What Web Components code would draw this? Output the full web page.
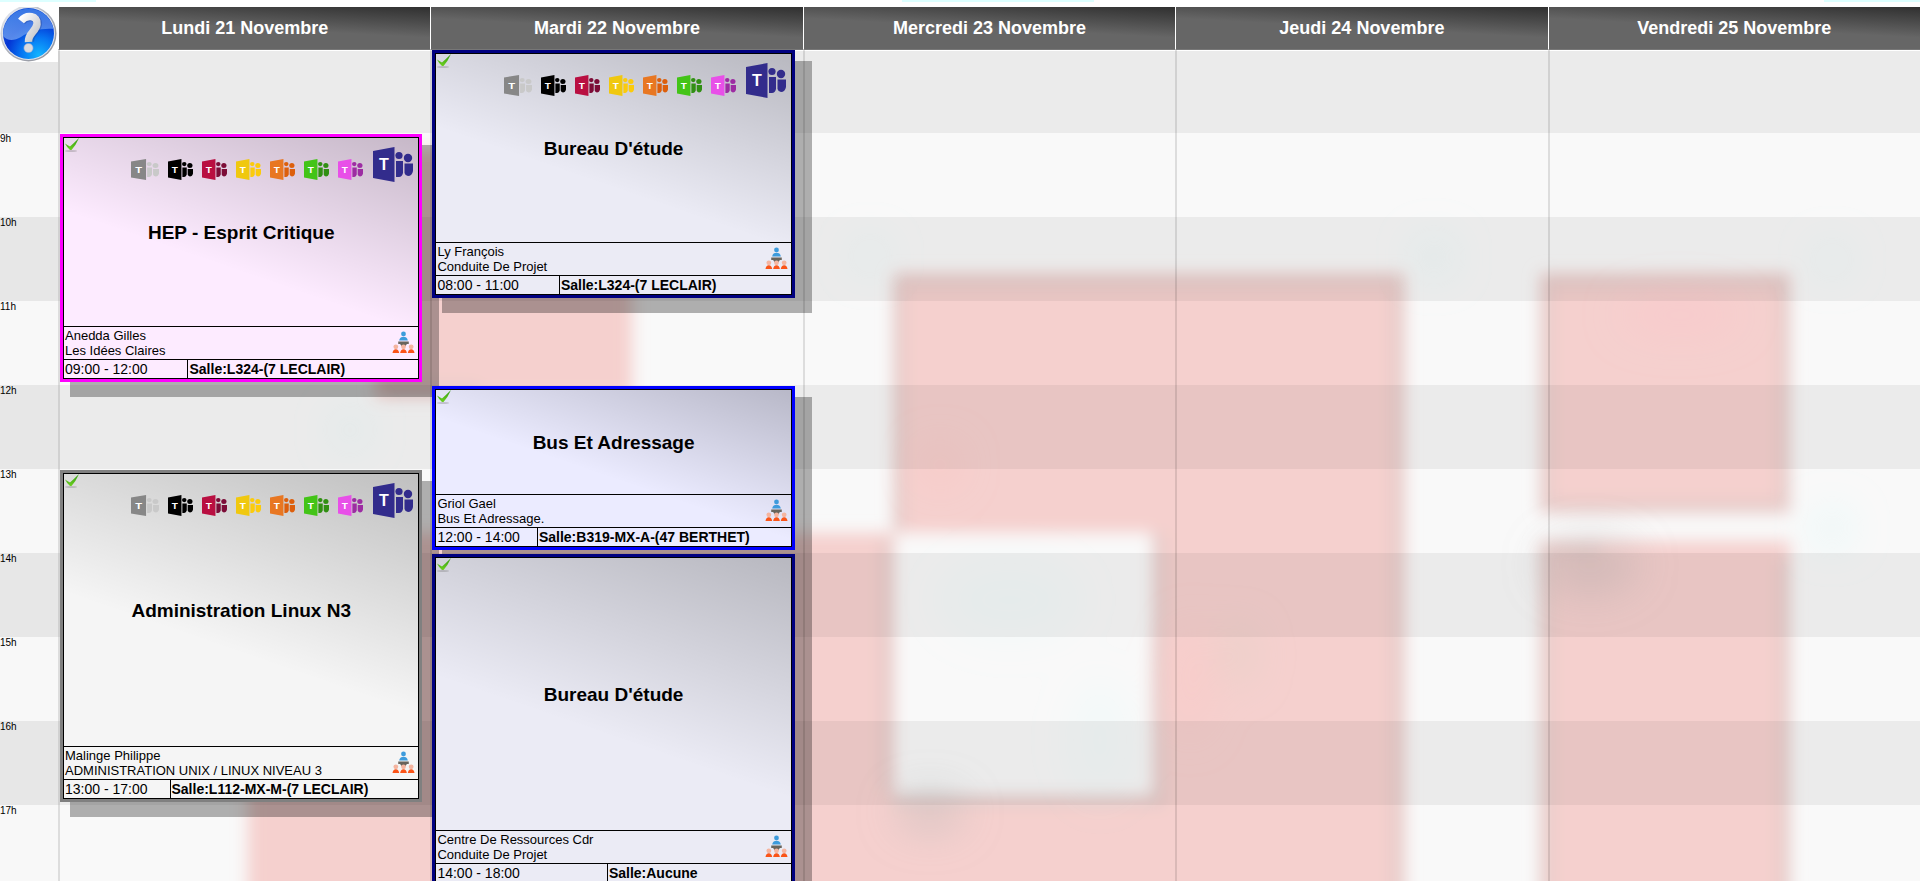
<!DOCTYPE html>
<html lang="fr">
<head>
<meta charset="utf-8">
<title>Emploi du temps</title>
<style>
  html, body { margin: 0; height: 100%; }
  body { background: #fff; font-family: "Liberation Sans", Arial, sans-serif; color: #000; overflow: hidden; }
</style>
</head>
<body>
<week-planner>
  <help-button slot="gutter"></help-button>
  <hour-scale slot="gutter"></hour-scale>

  <day-heading slot="headings">Lundi 21 Novembre</day-heading>
  <day-heading slot="headings">Mardi 22 Novembre</day-heading>
  <day-heading slot="headings">Mercredi 23 Novembre</day-heading>
  <day-heading slot="headings">Jeudi 24 Novembre</day-heading>
  <day-heading slot="headings">Vendredi 25 Novembre</day-heading>

  <day-column>
    <course-card start="9" hours="3" tone="magenta" teams>
      HEP - Esprit Critique
      <span slot="teacher">Anedda Gilles</span>
      <span slot="subject">Les Idées Claires</span>
      <span slot="time">09:00 - 12:00</span>
      <span slot="room">Salle:L324-(7 LECLAIR)</span>
    </course-card>
    <course-card start="13" hours="4" tone="grey" teams>
      Administration Linux N3
      <span slot="teacher">Malinge Philippe</span>
      <span slot="subject">ADMINISTRATION UNIX / LINUX NIVEAU 3</span>
      <span slot="time">13:00 - 17:00</span>
      <span slot="room">Salle:L112-MX-M-(7 LECLAIR)</span>
    </course-card>
  </day-column>
  <day-column>
    <course-card start="8" hours="3" tone="navy" teams>
      Bureau D'étude
      <span slot="teacher">Ly François</span>
      <span slot="subject">Conduite De Projet</span>
      <span slot="time">08:00 - 11:00</span>
      <span slot="room">Salle:L324-(7 LECLAIR)</span>
    </course-card>
    <course-card start="12" hours="2" tone="blue">
      Bus Et Adressage
      <span slot="teacher">Griol Gael</span>
      <span slot="subject">Bus Et Adressage.</span>
      <span slot="time">12:00 - 14:00</span>
      <span slot="room">Salle:B319-MX-A-(47 BERTHET)</span>
    </course-card>
    <course-card start="14" hours="4" tone="navy">
      Bureau D'étude
      <span slot="teacher">Centre De Ressources Cdr</span>
      <span slot="subject">Conduite De Projet</span>
      <span slot="time">14:00 - 18:00</span>
      <span slot="room">Salle:Aucune</span>
    </course-card>
  </day-column>
  <day-column></day-column>
  <day-column></day-column>
  <day-column></day-column>
</week-planner>

<script>
const define = (name, html, setup) => {
  const template = document.createElement('template');
  template.innerHTML = html;
  customElements.define(name, class extends HTMLElement {
    constructor() {
      super();
      this.attachShadow({ mode: 'open' }).append(template.content.cloneNode(true));
    }
    connectedCallback() { if (setup) setup(this, this.shadowRoot); }
  });
};

define('week-planner', `
  <style>
    :host { display: block; --hour: 84px; height: 100vh; overflow: hidden; }
    .strip { height: 7px; background: linear-gradient(90deg, #dff 5%, #fff 5% 47%, #dff 47% 57%, #fff 57% 95%, #dff 95%) top / 100% 2px no-repeat; }
    .layout { display: grid; grid-template-columns: 58px 1fr; }
    .headings, .days { display: grid; grid-template-columns: repeat(5, 1fr); }
    .board { position: relative; isolation: isolate; background: #f9f9f9; }
    .backdrop { position: absolute; inset: 0; width: 100%; height: 100%; z-index: -2; }
    .board::before { content: ""; position: absolute; inset: 0; z-index: -1; border-top: 1px solid #fff; box-sizing: border-box;
      background: linear-gradient(rgba(0,0,0,.053) 50%, transparent 50%) 0 -2px / 100% calc(var(--hour) * 2); }
  </style>
  <div class="strip"></div>
  <div class="layout">
    <div><slot name="gutter"></slot></div>
    <div>
      <div class="headings"><slot name="headings"></slot></div>
      <div class="board">
        <svg class="backdrop" viewBox="58 50 1862 840" preserveAspectRatio="none" aria-hidden="true">
          <defs>
            <filter id="soft" x="-10%" y="-10%" width="120%" height="120%"><feGaussianBlur stdDeviation="8"/></filter>
            <filter id="haze" x="-50%" y="-50%" width="200%" height="200%"><feGaussianBlur stdDeviation="20"/></filter>
          </defs>
          <g filter="url(#soft)">
            <g fill="#f5d0ce">
              <path d="M375 150H632V398H375Z"/>
              <path d="M248 533H893V273H1405V960H248Z"/>
              <path d="M1540 273H1790V513H1540Z"/>
              <path d="M1540 541H1790V960H1540Z"/>
            </g>
            <path d="M895 533H1152V795H895Z" fill="#f9f9f9"/>
            <g fill="none" stroke="#b9b9b9" stroke-opacity=".28" stroke-width="12">
              <path d="M899 530V281H1397V900M1159 533V801H893M886 540V790"/>
              <path d="M1546 281H1784V506H1546Z"/>
              <path d="M1546 960V550H1600M1784 560V960"/>
              <path d="M385 391H480"/>
            </g>
          </g>
          <g filter="url(#haze)">
            <g fill="#c8f4f4" fill-opacity=".4">
              <circle cx="1434" cy="257" r="18"/><circle cx="870" cy="256" r="14"/>
              <circle cx="1832" cy="528" r="18"/><circle cx="1832" cy="260" r="14"/>
              <circle cx="350" cy="430" r="16"/>
              <ellipse cx="1010" cy="600" rx="70" ry="40" fill-opacity=".12"/>
              <ellipse cx="1100" cy="740" rx="30" ry="60" fill-opacity=".12"/>
            </g>
            <ellipse cx="1590" cy="565" rx="50" ry="30" fill="#a8a8a8" fill-opacity=".28"/>
            <ellipse cx="930" cy="812" rx="34" ry="20" fill="#b0b4b4" fill-opacity=".4"/>
            <circle cx="940" cy="465" r="20" fill="#ffc0bc" fill-opacity=".4"/>
            <ellipse cx="1680" cy="315" rx="60" ry="20" fill="#ffc0c8" fill-opacity=".35"/>
            <ellipse cx="1238" cy="655" rx="14" ry="30" fill="#d8d0c0" fill-opacity=".45"/>
            <ellipse cx="1190" cy="680" rx="20" ry="60" fill="#ffc4c0" fill-opacity=".3"/>
          </g>
        </svg>
        <div class="days"><slot></slot></div>
      </div>
    </div>
  </div>`);

define('day-heading', `
  <style>
    :host { display: flex; align-items: center; justify-content: center; height: 43px; box-sizing: border-box;
      border-left: 1px solid #fff; border-bottom: 1px solid #777;
      background: linear-gradient(183deg, #303030, #666 50%); color: #fff; }
    h2 { margin: 0; font-size: 18px; line-height: 20px; font-weight: bold; }
  </style>
  <h2><slot></slot></h2>`);

define('day-column', `
  <style>
    :host { display: grid; grid-template-rows: repeat(10, var(--hour)); border-left: 2px solid rgba(0,0,0,.11); min-width: 0; }
  </style>
  <slot></slot>`);

define('hour-scale', `
  <style>
    :host { display: block; font-size: 10px; line-height: 12px; }
    ol { margin: 0; padding: 0; list-style: none; }
    li { height: var(--hour); background: #f8f8f8; }
    li:nth-child(odd) { background: #e7e7e7; }
    li:first-child { height: 71px; }
  </style>
  <ol></ol>`, (host, root) => {
  root.querySelector('ol').innerHTML =
    ['', '9h', '10h', '11h', '12h', '13h', '14h', '15h', '16h', '17h'].map(h => '<li>' + h + '</li>').join('');
});

define('help-button', `
  <style>
    :host { display: block; height: 55px; }
    button { display: block; padding: 0; border: 0; background: #fff; cursor: pointer; }
    svg { display: block; width: 57px; height: 55px; }
  </style>
  <button type="button" aria-label="Aide">
    <svg viewBox="0 2 57 55" aria-hidden="true">
      <defs>
        <linearGradient id="ring" x1="0" y1="0" x2="1" y2="1"><stop offset="0" stop-color="#f4f6fa"/><stop offset=".5" stop-color="#a9adb8"/><stop offset="1" stop-color="#8c8f98"/></linearGradient>
        <radialGradient id="ball" cx=".7" cy=".92" r=".85"><stop offset="0" stop-color="#12b4ff"/><stop offset=".4" stop-color="#0776f2"/><stop offset=".75" stop-color="#0434d4"/><stop offset="1" stop-color="#1450d8"/></radialGradient>
        <linearGradient id="gloss" x1="0" y1="0" x2="0" y2="1"><stop offset="0" stop-color="#3f7fe8"/><stop offset="1" stop-color="#6f9ff0"/></linearGradient>
        <linearGradient id="mark" x1="0" y1="0" x2="1" y2="1"><stop offset="0" stop-color="#fff"/><stop offset="1" stop-color="#bfc1c6"/></linearGradient>
      </defs>
      <circle cx="28.500" cy="28.500" r="28" fill="url(#ring)"/>
      <circle cx="28.500" cy="28.500" r="26.500" fill="#dfe4ee"/>
      <circle cx="28.500" cy="28.500" r="25.500" fill="url(#ball)"/>
      <path d="M3.200 31A25.500 25.500 0 0 1 53.600 24C42 23 30 26 21 32C14 36 7 36 3.200 31Z" fill="url(#gloss)" opacity=".8"/>
      <path d="M22 16.500C28 9.500 39 12 38 19.500C37 27 29.500 28 30 37" fill="none" stroke="#1c3c90" stroke-width="8" opacity=".35"/>
      <path d="M21 16C27 8.500 38 11 37 19C36 27 28 28 28.500 37" fill="none" stroke="url(#mark)" stroke-width="7.500"/>
      <circle cx="28.500" cy="43" r="4.600" fill="#d9dade" stroke="#8fa5d8" stroke-width=".6"/>
    </svg>
  </button>`);

define('teams-link', `
  <style>
    :host { display: block; }
    a { display: block; }
    svg { display: block; width: 25px; height: 21px; }
    :host([size="wide"]) svg { width: 28px; }
    :host([size="large"]) svg { width: 40px; height: 35px; }
    text { font: bold 16px "Liberation Sans", Arial, sans-serif; }
  </style>
  <a href="#">
    <svg viewBox="0 0 40 35" preserveAspectRatio="none" aria-hidden="true">
      <g class="people">
        <circle cx="26" cy="8.500" r="3.600"/><circle cx="35" cy="11" r="4.200"/>
        <path d="M23 14H30V26Q29 30 26 30H23ZM31.500 16.500H40V24Q39 29 35 29Q32 28.500 31.500 26Z"/>
      </g>
      <path class="tile" d="M0 4L21.500 0V35L0 31Z"/>
      <text x="6" y="23" fill="#fff">T</text>
    </svg>
  </a>`, (host, root) => {
  root.querySelector('.tile').setAttribute('fill', host.getAttribute('tile'));
  root.querySelector('.people').setAttribute('fill', host.getAttribute('people'));
  root.querySelector('a').setAttribute('aria-label', 'Teams');
});

define('course-card', `
  <style>
    :host { display: block; position: relative; isolation: isolate; min-width: 0; box-sizing: border-box; padding: 0 8px 4px 0; }
    :host([tone="magenta"]) { --edge: #f0f; --fill: #fdebff; }
    :host([tone="grey"]) { --edge: #808080; --fill: #f5f5f5; }
    :host([tone="navy"]) { --edge: #000080; --fill: #ebebf5; }
    :host([tone="blue"]) { --edge: #00f; --fill: #ebebff; }
    :host::before { content: ""; position: absolute; z-index: -1; inset: 11px -9px -11px 10px; background: rgba(0,0,0,.3); }
    .card { height: 100%; box-sizing: border-box; border: 3px solid var(--edge);
      background: linear-gradient(199deg, rgba(0,0,0,.22), transparent 54%) var(--fill); }
    table { width: 100%; height: 100%; border-collapse: collapse; }
    td { border: 1px solid #000; padding: 0 1px; font-size: 14px; line-height: 18px; height: 18px; white-space: nowrap; }
    .room { font-weight: bold; }
    .main { height: auto; padding: 2px 0 0; position: relative; text-align: center; }
    h3 { margin: 0; font-size: 19px; line-height: 22px; font-weight: bold; white-space: normal; }
    .check { position: absolute; left: 0; top: 0; width: 16px; height: 14px; }
    .teams { position: absolute; right: 5px; top: 9px; display: flex; align-items: center; gap: 9px; }
    .teams teams-link { margin-top: 10px; }
    .teams teams-link[size="large"] { margin: 0 0 0 1px; }
    .people { display: flex; justify-content: space-between; align-items: flex-start; height: 32px; font-size: 13px; line-height: 15px; }
    .people svg { width: 23px; height: 23px; margin: 4px 2px 0 0; }
    .who { padding-top: 1px; }
    .who div { height: 15px; }
  </style>
  <article class="card">
    <table>
      <tr><td class="main" colspan="2">
        <svg class="check" viewBox="0 0 16 14" aria-hidden="true">
          <defs><linearGradient id="leaf" x1="0" y1="0" x2="0" y2="1"><stop offset="0" stop-color="#2f9a10"/><stop offset="1" stop-color="#6ed022"/></linearGradient></defs>
          <ellipse cx="7" cy="13" rx="6" ry="1" fill="#777" opacity=".35"/>
          <path d="M1 5.500Q4 7.500 6 8.500Q10 5 15 0Q12 7 7.500 12H6Q3 9.500 1 5.500Z" fill="url(#leaf)"/>
        </svg>
        <div class="teams">
          <teams-link size="wide" tile="#878787" people="#c9c9c9"></teams-link>
          <teams-link tile="#000" people="#000"></teams-link>
          <teams-link tile="#b90f41" people="#7c0c37"></teams-link>
          <teams-link tile="#f0c80f" people="#fbcb0c"></teams-link>
          <teams-link tile="#e87722" people="#dd5f0c"></teams-link>
          <teams-link tile="#43c417" people="#318f13"></teams-link>
          <teams-link tile="#e84fe8" people="#9d2ca3"></teams-link>
          <teams-link size="large" tile="#322c8c" people="#322c8c"></teams-link>
        </div>
        <h3><slot></slot></h3>
      </td></tr>
      <tr><td colspan="2" style="height:32px">
        <div class="people">
          <div class="who"><div><slot name="teacher"></slot></div><div><slot name="subject"></slot></div></div>
          <svg viewBox="0 0 24 24" aria-hidden="true">
            <circle cx="12" cy="3" r="2.500" fill="#3d9bdc"/>
            <path d="M7.500 10Q8 6 12 6Q16 6 16.500 10Z" fill="#3d9bdc"/>
            <path d="M6.500 11H17.500V13.500H15.500L14 16H10L8.500 13.500H6.500Z" fill="#68645c"/>
            <g fill="#f5b5a0"><circle cx="4" cy="16.500" r="2.500"/><circle cx="12" cy="16.500" r="2.500"/><circle cx="20" cy="16.500" r="2.500"/></g>
            <path d="M.500 23Q1 19 4 19Q7 19 7.500 23ZM8.500 23Q9 19 12 19Q15 19 15.500 23ZM16.500 23Q17 19 20 19Q23 19 23.500 23Z" fill="#fa5418"/>
          </svg>
        </div>
      </td></tr>
      <tr><td class="time"><slot name="time"></slot></td><td class="room"><slot name="room"></slot></td></tr>
    </table>
  </article>`, (host, root) => {
  host.style.gridRow = (host.getAttribute('start') - 7) + ' / span ' + host.getAttribute('hours');
  host.style.gridColumn = '1';
  if (!host.hasAttribute('teams')) root.querySelector('.teams').remove();
});
</script>
</body>
</html>
